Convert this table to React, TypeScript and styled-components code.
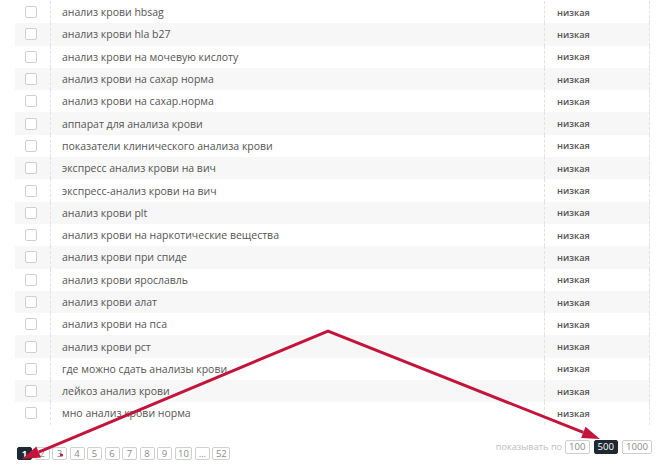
import React from "react";
import styled, { createGlobalStyle } from "styled-components";

const GlobalStyle = createGlobalStyle`
  html, body {
    margin: 0;
    padding: 0;
    background: #fff;
  }
  body {
    font-family: "Open Sans", "Noto Sans", sans-serif;
    color: #555;
  }
`;

const Page = styled.div`
  position: relative;
  width: 660px;
  height: 464px;
  overflow: hidden;
  padding-top: 1px;
  box-sizing: border-box;
`;

const Table = styled.div`
  margin-left: 15px;
  width: 635px;
`;

const Row = styled.div<{ $striped: boolean }>`
  display: grid;
  grid-template-columns: 35px 494px 106px;
  height: 22.3px;
  background: ${(p) => (p.$striped ? "#f7f7f7" : "#fff")};
`;

const Cell = styled.div<{ $dashed?: boolean }>`
  display: flex;
  align-items: center;
  border-left: ${(p) => (p.$dashed ? "1px dashed #e2e2e2" : "none")};
`;

const CheckCell = styled(Cell)`
  padding-left: 10px;
`;

const Check = styled.span`
  width: 12px;
  height: 12px;
  box-sizing: border-box;
  border: 1px solid #cfcfcf;
  border-radius: 2px;
  background: #fff;
`;

const Phrase = styled(Cell)`
  padding-left: 11px;
  font-size: 10.5px;
  color: #555;
  white-space: nowrap;
`;

const Level = styled(Cell)`
  padding-left: 12px;
  font-size: 9.2px;
  font-weight: 600;
  color: #555;
  border-right: 1px dashed #e2e2e2;
`;

const Footer = styled.div`
  display: flex;
  justify-content: space-between;
  align-items: flex-start;
  padding: 15px 8px 0 17px;
`;

const Pager = styled.div`
  display: flex;
  gap: 2.5px;
  margin-top: 7px;
`;

const PageBtn = styled.span<{ $active?: boolean }>`
  min-width: 15px;
  height: 13px;
  padding: 0 2.5px;
  box-sizing: border-box;
  display: flex;
  align-items: center;
  justify-content: center;
  font-size: 9.5px;
  border-radius: 2px;
  border: 1px solid ${(p) => (p.$active ? "#1f2933" : "#cfcfcf")};
  background: ${(p) => (p.$active ? "#1f2933" : "#fff")};
  color: ${(p) => (p.$active ? "#fff" : "#8a8a8a")};
  font-weight: ${(p) => (p.$active ? 700 : 400)};
`;

const SizeGroup = styled.div`
  display: flex;
  align-items: center;
  gap: 4px;
`;

const SizeLabel = styled.span`
  font-size: 9.2px;
  color: #bdbdbd;
  margin-right: -1px;
`;

const SizeBtn = styled.span<{ $active?: boolean }>`
  height: 14px;
  padding: 0 3px;
  box-sizing: border-box;
  display: flex;
  align-items: center;
  font-size: 9.6px;
  border-radius: 2px;
  border: 1px solid ${(p) => (p.$active ? "#1f2933" : "#cfcfcf")};
  background: ${(p) => (p.$active ? "#1f2933" : "#fff")};
  color: ${(p) => (p.$active ? "#fff" : "#8a8a8a")};
`;

const Overlay = styled.svg`
  position: absolute;
  left: 0;
  top: 0;
  pointer-events: none;
`;

const phrases = [
  "анализ крови hbsag",
  "анализ крови hla b27",
  "анализ крови на мочевую кислоту",
  "анализ крови на сахар норма",
  "анализ крови на сахар.норма",
  "аппарат для анализа крови",
  "показатели клинического анализа крови",
  "экспресс анализ крови на вич",
  "экспресс-анализ крови на вич",
  "анализ крови plt",
  "анализ крови на наркотические вещества",
  "анализ крови при спиде",
  "анализ крови ярославль",
  "анализ крови алат",
  "анализ крови на пса",
  "анализ крови рст",
  "где можно сдать анализы крови",
  "лейкоз анализ крови",
  "мно анализ крови норма",
];

const pages = ["1", "2", "3", "4", "5", "6", "7", "8", "9", "10", "...", "52"];

export default function App() {
  return (
    <Page>
      <GlobalStyle />
      <Table>
        {phrases.map((p, i) => (
          <Row key={p} $striped={i % 2 === 1}>
            <CheckCell>
              <Check />
            </CheckCell>
            <Phrase $dashed>{p}</Phrase>
            <Level $dashed>низкая</Level>
          </Row>
        ))}
      </Table>
      <Footer>
        <Pager>
          {pages.map((n) => (
            <PageBtn key={n} $active={n === "1"}>
              {n}
            </PageBtn>
          ))}
        </Pager>
        <SizeGroup>
          <SizeLabel>показывать по</SizeLabel>
          <SizeBtn>100</SizeBtn>
          <SizeBtn $active>500</SizeBtn>
          <SizeBtn>1000</SizeBtn>
        </SizeGroup>
      </Footer>
      <Overlay width="660" height="464" viewBox="0 0 660 464">
        <polyline
          points="38.6,452.1 328,331 583.3,432.4"
          fill="none"
          stroke="#c3143b"
          strokeWidth="3"
          strokeLinejoin="miter"
        />
        <polygon points="22,459 40.9,457.6 36.3,446.6" fill="#c3143b" />
        <polygon points="600,439 581.1,438 585.5,426.8" fill="#c3143b" />
        <circle cx="61.5" cy="455" r="1.6" fill="#c3143b" />
      </Overlay>
    </Page>
  );
}
